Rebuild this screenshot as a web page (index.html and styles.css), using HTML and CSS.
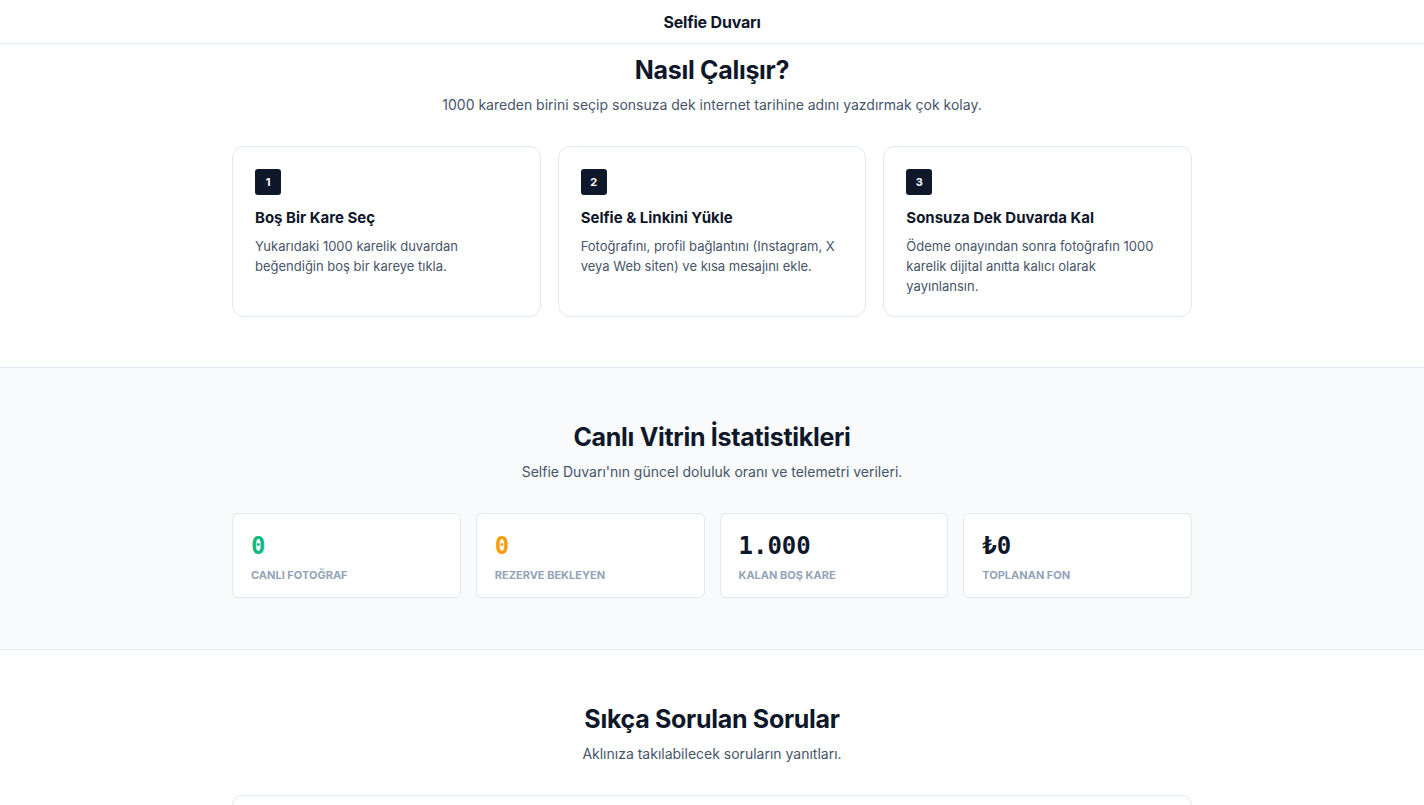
FILE: index.html
```html
<!DOCTYPE html>
<html lang="tr">
<head>
<meta charset="utf-8">
<title>Selfie Duvarı</title>
<link rel="stylesheet" href="styles.css">
</head>
<body>
<header class="topbar">
  <span class="brand">Selfie Duvarı</span>
</header>

<section class="section how">
  <div class="container">
    <h2 class="section-title">Nasıl Çalışır?</h2>
    <p class="section-sub">1000 kareden birini seçip sonsuza dek internet tarihine adını yazdırmak çok kolay.</p>
    <div class="steps">
      <article class="step">
        <span class="step-num">1</span>
        <h3 class="step-title">Boş Bir Kare Seç</h3>
        <p class="step-text">Yukarıdaki 1000 karelik duvardan beğendiğin boş bir kareye tıkla.</p>
      </article>
      <article class="step">
        <span class="step-num">2</span>
        <h3 class="step-title">Selfie &amp; Linkini Yükle</h3>
        <p class="step-text">Fotoğrafını, profil bağlantını (Instagram, X veya Web siten) ve kısa mesajını ekle.</p>
      </article>
      <article class="step">
        <span class="step-num">3</span>
        <h3 class="step-title">Sonsuza Dek Duvarda Kal</h3>
        <p class="step-text">Ödeme onayından sonra fotoğrafın 1000 karelik dijital anıtta kalıcı olarak yayınlansın.</p>
      </article>
    </div>
  </div>
</section>

<section class="section stats">
  <div class="container">
    <h2 class="section-title">Canlı Vitrin İstatistikleri</h2>
    <p class="section-sub">Selfie Duvarı'nın güncel doluluk oranı ve telemetri verileri.</p>
    <div class="stat-grid">
      <div class="stat">
        <div class="stat-value green">0</div>
        <div class="stat-label">Canlı Fotoğraf</div>
      </div>
      <div class="stat">
        <div class="stat-value amber">0</div>
        <div class="stat-label">Rezerve Bekleyen</div>
      </div>
      <div class="stat">
        <div class="stat-value">1.000</div>
        <div class="stat-label">Kalan Boş Kare</div>
      </div>
      <div class="stat">
        <div class="stat-value">₺0</div>
        <div class="stat-label">Toplanan Fon</div>
      </div>
    </div>
  </div>
</section>

<section class="section faq">
  <div class="container">
    <h2 class="section-title">Sıkça Sorulan Sorular</h2>
    <p class="section-sub">Aklınıza takılabilecek soruların yanıtları.</p>
    <div class="faq-list">
      <div class="faq-item">
        <div class="faq-q">Bir kareyi ne kadar süreyle kullanabilirim?</div>
      </div>
    </div>
  </div>
</section>
</body>
</html>
```
FILE: styles.css
```css
* {
  box-sizing: border-box;
}

html, body {
  margin: 0;
  padding: 0;
}

body {
  font-family: Inter, "Noto Sans", "Liberation Sans", sans-serif;
  color: #0f172a;
  background: #ffffff;
}

.topbar {
  height: 44px;
  display: flex;
  align-items: center;
  justify-content: center;
  border-bottom: 1px solid #e2e8f0;
  background: #ffffff;
}

.brand {
  font-size: 16px;
  font-weight: 700;
  color: #0f172a;
  letter-spacing: -0.2px;
}

.section {
  padding: 54px 0 51px;
}

.section.how {
  padding-top: 11px;
  padding-bottom: 50px;
}

.section.stats {
  background: #f8fafc;
  border-top: 1px solid #e2e8f0;
  border-bottom: 1px solid #e2e8f0;
}

.container {
  width: 960px;
  margin: 0 auto;
}

.section-title {
  margin: 0;
  text-align: center;
  font-size: 25px;
  line-height: 30px;
  font-weight: 700;
  letter-spacing: -0.3px;
  color: #0f172a;
}

.section-sub {
  margin: 10px 0 31px;
  text-align: center;
  font-size: 14px;
  line-height: 20px;
  color: #475569;
}

.steps {
  display: grid;
  grid-template-columns: repeat(3, 1fr);
  gap: 17px;
}

.step {
  border: 1px solid #e2e8f0;
  border-radius: 12px;
  background: #ffffff;
  padding: 22px;
  height: 171px;
}

.step-num {
  display: flex;
  align-items: center;
  justify-content: center;
  width: 26px;
  height: 26px;
  border-radius: 3px;
  background: #0f172a;
  color: #ffffff;
  font-size: 11px;
  font-weight: 700;
}

.step-title {
  margin: 13px 0 8px;
  font-size: 15px;
  line-height: 20px;
  font-weight: 700;
  color: #0f172a;
}

.step-text {
  margin: 0;
  font-size: 13px;
  line-height: 20px;
  color: #475569;
}

.stat-grid {
  display: grid;
  grid-template-columns: repeat(4, 1fr);
  gap: 15px;
}

.stat {
  background: #ffffff;
  border: 1px solid #e2e8f0;
  border-radius: 6px;
  height: 85px;
  padding: 18px 18px 0;
}

.stat-value {
  font-family: "DejaVu Sans Mono", "Liberation Mono", monospace;
  font-size: 24px;
  line-height: 28px;
  font-weight: 700;
  color: #0f172a;
}

.stat-value.green {
  color: #10b981;
}

.stat-value.amber {
  color: #f59e0b;
}

.stat-label {
  margin-top: 8px;
  font-size: 11px;
  line-height: 14px;
  font-weight: 700;
  text-transform: uppercase;
  color: #94a3b8;
}

.faq-list {
  display: flex;
  flex-direction: column;
  gap: 12px;
}

.faq-item {
  border: 1px solid #e2e8f0;
  border-radius: 10px;
  background: #ffffff;
  padding: 18px 22px;
}

.faq-q {
  font-size: 15px;
  font-weight: 600;
  color: #0f172a;
}
```
